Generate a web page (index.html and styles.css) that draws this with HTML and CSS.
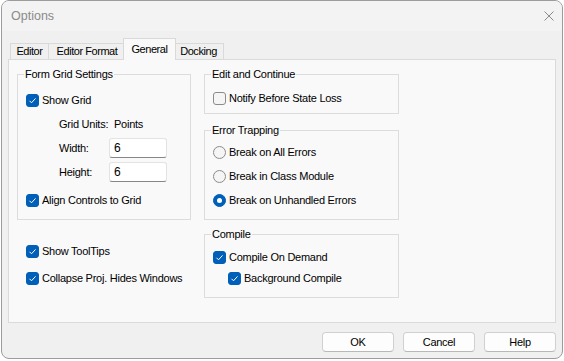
FILE: index.html
```html
<!DOCTYPE html>
<html lang="en">
<head>
    <meta charset="UTF-8">
    <meta name="viewport" content="width=device-width, initial-scale=1.0">
    <title>Options</title>
    <link rel="stylesheet" href="styles.css">
</head>
<body>
    <div class="window">
        <div class="titlebar">
            <span class="title">Options</span>
            <svg class="close" width="10" height="10" viewBox="0 0 10 10">
                <path d="M0.5 0.5 L9.5 9.5 M9.5 0.5 L0.5 9.5" stroke="#8a8a8a" stroke-width="1" fill="none"/>
            </svg>
        </div>

        <div class="tabs">
            <div class="tab tab-editor">Editor</div>
            <div class="tab tab-format">Editor Format</div>
            <div class="tab tab-general active">General</div>
            <div class="tab tab-docking">Docking</div>
        </div>

        <div class="panel">
            <div class="col-left">
                <fieldset class="group group-grid">
                    <legend>Form Grid Settings</legend>
                    <label class="opt"><span class="box on"><svg width="11" height="11" viewBox="0 0 11 11"><path d="M2.5 5.8 L4.5 7.8 L8.5 3.4" stroke="#fff" stroke-width="1" fill="none"/></svg></span>Show Grid</label>
                    <div class="units">
                        <span>Grid Units:</span>
                        <span class="units-val">Points</span>
                        <span>Width:</span>
                        <span class="field">6</span>
                        <span>Height:</span>
                        <span class="field">6</span>
                    </div>
                    <label class="opt opt-align"><span class="box on"><svg width="11" height="11" viewBox="0 0 11 11"><path d="M2.5 5.8 L4.5 7.8 L8.5 3.4" stroke="#fff" stroke-width="1" fill="none"/></svg></span>Align Controls to Grid</label>
                </fieldset>
                <label class="opt opt-tooltips"><span class="box on"><svg width="11" height="11" viewBox="0 0 11 11"><path d="M2.5 5.8 L4.5 7.8 L8.5 3.4" stroke="#fff" stroke-width="1" fill="none"/></svg></span>Show ToolTips</label>
                <label class="opt opt-collapse"><span class="box on"><svg width="11" height="11" viewBox="0 0 11 11"><path d="M2.5 5.8 L4.5 7.8 L8.5 3.4" stroke="#fff" stroke-width="1" fill="none"/></svg></span>Collapse Proj. Hides Windows</label>
            </div>

            <div class="col-right">
                <fieldset class="group group-edit">
                    <legend>Edit and Continue</legend>
                    <label class="opt"><span class="box"></span>Notify Before State Loss</label>
                </fieldset>

                <fieldset class="group group-trap">
                    <legend>Error Trapping</legend>
                    <label class="opt"><span class="box radio"></span>Break on All Errors</label>
                    <label class="opt"><span class="box radio"></span>Break in Class Module</label>
                    <label class="opt"><span class="box radio on"></span>Break on Unhandled Errors</label>
                </fieldset>

                <fieldset class="group group-compile">
                    <legend>Compile</legend>
                    <label class="opt"><span class="box on"><svg width="11" height="11" viewBox="0 0 11 11"><path d="M2.5 5.8 L4.5 7.8 L8.5 3.4" stroke="#fff" stroke-width="1" fill="none"/></svg></span>Compile On Demand</label>
                    <label class="opt opt-sub"><span class="box on"><svg width="11" height="11" viewBox="0 0 11 11"><path d="M2.5 5.8 L4.5 7.8 L8.5 3.4" stroke="#fff" stroke-width="1" fill="none"/></svg></span>Background Compile</label>
                </fieldset>
            </div>
        </div>

        <div class="buttons">
            <button class="btn">OK</button>
            <button class="btn">Cancel</button>
            <button class="btn">Help</button>
        </div>
    </div>
</body>
</html>
```

FILE: styles.css
```css
* {
    box-sizing: border-box;
    margin: 0;
    padding: 0;
}
body {
    font-family: "Liberation Sans", Arial, sans-serif;
    font-size: 11px;
    letter-spacing: -0.25px;
    color: #000;
    background-color: #fff;
}
.window {
    width: 562px;
    height: 359px;
    margin-left: 1px;
    border: 1px solid #9c9c9c;
    border-radius: 8px;
    background-color: #f0f0f0;
    overflow: hidden;
}
.titlebar {
    height: 30px;
    background-color: #f3f3f3;
    display: flex;
    align-items: center;
    justify-content: space-between;
    padding: 0 8px 0 9px;
}
.title {
    font-size: 12.5px;
    letter-spacing: 0;
    color: #8a8a8a;
}

/* tab strip */
.tabs {
    height: 28px;
    display: flex;
    align-items: flex-end;
    padding-left: 8px;
}
.tab {
    height: 16px;
    margin-left: -1px;
    padding-bottom: 1px;
    border: 1px solid #d9d9d9;
    border-bottom: none;
    background-color: #f0f0f0;
    display: flex;
    align-items: center;
    justify-content: center;
    letter-spacing: -0.45px;
}
.tab:first-child {
    margin-left: 0;
}
.tab-editor {
    width: 39px;
}
.tab-format {
    width: 78px;
}
.tab-docking {
    width: 51px;
}
.tab.active {
    width: 53px;
    height: 22px;
    margin: 0 -2px -1px -3px;
    padding-bottom: 2px;
    background-color: #f9f9f9;
    position: relative;
    z-index: 1;
}

/* page */
.panel {
    height: 264px;
    margin: 0 6px;
    border: 1px solid #dadada;
    background-color: #f9f9f9;
    display: grid;
    grid-template-columns: 174px 195px;
    column-gap: 13px;
    align-items: start;
    padding: 8px 0 0 8px;
}
.group {
    border: 1px solid #dcdcdc;
    padding: 0 8px;
    min-width: 0;
}
.group legend {
    line-height: 13px;
    padding: 0 1px;
    margin-left: -2px;
}
.opt {
    display: flex;
    align-items: center;
    gap: 3px;
    height: 20px;
}
.box {
    width: 13px;
    height: 13px;
    flex: none;
    border: 1px solid #8b8b8b;
    border-radius: 3px;
    background-color: #f5f5f5;
    display: flex;
    align-items: center;
    justify-content: center;
}
.box.on {
    background-color: #005fb8;
    border-color: #005fb8;
}
.radio {
    border-radius: 50%;
}
.radio.on::after {
    content: "";
    width: 5px;
    height: 5px;
    border-radius: 50%;
    background-color: #fff;
}

.group-grid {
    padding: 9px 8px 9px;
}
.units {
    display: grid;
    grid-template-columns: 50px 58px;
    grid-auto-rows: 20px;
    row-gap: 4px;
    align-items: center;
    margin: 4px 0 0 33px;
}
.units-val {
    padding-left: 5px;
}
.field {
    height: 20px;
    padding-left: 4px;
    background-color: #fff;
    border: 1px solid #e3e3e3;
    border-bottom-color: #868686;
    border-radius: 3px;
    font-size: 12px;
    display: flex;
    align-items: center;
}
.opt-align {
    margin-top: 8px;
}
.opt-tooltips {
    margin: 21px 0 0 9px;
}
.opt-collapse {
    margin: 7px 0 0 9px;
}

.col-right {
    display: flex;
    flex-direction: column;
}
.group-edit {
    padding: 7px 8px 5px;
}
.group-trap {
    margin-top: 10px;
    padding: 5px 8px 9px;
}
.group-trap .opt + .opt {
    margin-top: 4px;
}
.group-compile {
    margin-top: 8px;
    padding: 6px 8px 9px;
}
.opt-sub {
    margin: 1px 0 0 15px;
}

/* dialog buttons */
.buttons {
    display: flex;
    justify-content: flex-end;
    gap: 9px;
    padding-right: 6px;
    margin-top: 9px;
}
.btn {
    width: 72px;
    height: 20px;
    border: 1px solid #d0d0d0;
    border-bottom-color: #b8b8b8;
    border-radius: 4px;
    background-color: #fdfdfd;
    font-family: inherit;
    font-size: 11px;
    letter-spacing: -0.3px;
    color: #000;
}
```
